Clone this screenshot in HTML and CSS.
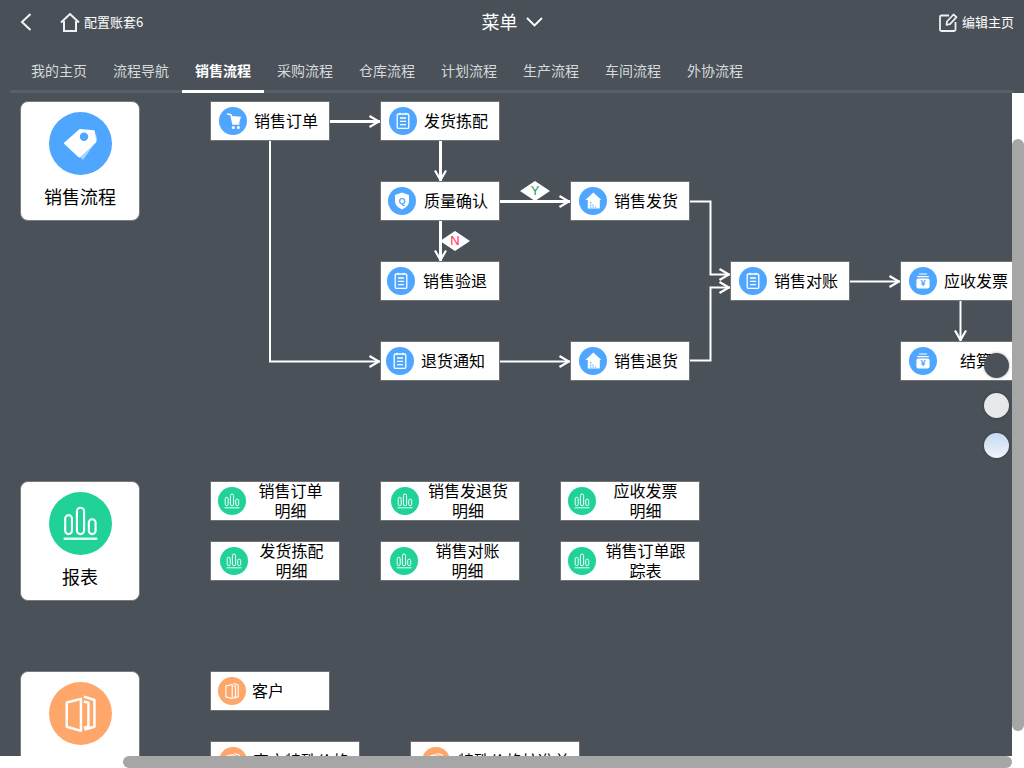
FILE: index.html
```html
<!DOCTYPE html>
<html lang="zh-CN">
<head>
  <meta charset="UTF-8" />
  <meta name="viewport" content="width=device-width, initial-scale=1.0" />
  <title>菜单</title>
  <link rel="stylesheet" href="styles.css">
</head>
<body>

  <svg class="defs" aria-hidden="true">
    <symbol id="i-cart" viewBox="0 0 28 28">
      <path d="M8.500 7 L12 7.800 L14 17 H20" fill="none" stroke="#fff" stroke-width="1.600" stroke-linecap="round" stroke-linejoin="round"/>
      <path d="M12.600 9 L22 9.700 L20 16.400 H14z" fill="#fff"/>
      <circle cx="14.400" cy="20.400" r="1.500" fill="#fff"/>
      <circle cx="19.400" cy="20.400" r="1.500" fill="#fff"/>
    </symbol>
    <symbol id="i-list" viewBox="0 0 28 28">
      <rect x="8.200" y="7" width="11.600" height="14.400" rx="1.200" fill="none" stroke="#fff" stroke-width="1.300"/>
      <path d="M11 5.800 V8 M17 5.800 V8 M11 11 H17 M11 14.300 H17 M11 17.600 H17" fill="none" stroke="#fff" stroke-width="1.300"/>
    </symbol>
    <symbol id="i-shield" viewBox="0 0 28 28">
      <path d="M14 5.600 L21 8 V14 C21 18.400 17.500 21 14 22.400 C10.500 21 7 18.400 7 14 V8z" fill="#fff"/>
    </symbol>
    <symbol id="i-house" viewBox="0 0 28 28">
      <path d="M14.300 5.600 L22.400 13 H20.800 V21.400 H8.800 V13 H6.400z" fill="#fff"/>
      <path d="M11 15h1.400v1.400H11z M11 17.400h1.400v1.400H11z M11 19.400h1.400v1.400H11z M13.400 17.400h1.400v1.400h-1.400z M13.400 19.400h1.400v1.400h-1.400z M15.800 19.400h1.400v1.400h-1.400z" fill="#7dbcff"/>
    </symbol>
    <symbol id="i-bag" viewBox="0 0 28 28">
      <path d="M10 7 H18 M8.200 9.600 H19.800" fill="none" stroke="#fff" stroke-width="1.200"/>
      <rect x="7.400" y="11.400" width="13.200" height="10" rx="1.800" fill="#fff"/>
    </symbol>
    <symbol id="i-bars" viewBox="0 0 28 28">
      <g fill="none" stroke="#fff" stroke-width=".950">
        <rect x="7.200" y="10.300" width="3" height="8.400" rx="1.500"/>
        <rect x="12.400" y="7" width="3.200" height="11.700" rx="1.600"/>
        <rect x="17.700" y="12.100" width="3" height="6.600" rx="1.500"/>
      </g>
      <path d="M6.500 20.800 H21.500" stroke="#fff" stroke-width="1.100" opacity=".85"/>
    </symbol>
    <symbol id="i-books" viewBox="0 0 28 28">
      <g fill="none" stroke="#fff" stroke-width="1.100" stroke-linejoin="round">
        <path d="M7.900 9.100 L14.200 7.500 V21.700 L7.900 19.900z"/>
        <path d="M15.500 8.700 L17.500 9.200 V19.800 L15.500 20.400"/>
        <path d="M15.500 6.500 L20.200 8 V19.900 L15.700 21.100"/>
      </g>
    </symbol>
    <symbol id="i-tag" viewBox="0 0 63 63">
      <path d="M34 48 L48.300 28 L47 22 L30 44z" fill="#a6d4ff"/>
      <path d="M16 31.300 L31 18 L44.800 19.200 L46.300 29.700 L30.300 44.500z" fill="#fff" stroke="#fff" stroke-width="2" stroke-linejoin="round"/>
      <circle cx="35" cy="24.700" r="4.200" fill="#4fa6ff"/>
    </symbol>
  </svg>

  <div class="page">

    <header class="topbar">
      <div class="topbar-left">
        <svg class="back" viewBox="0 0 12 18" width="12" height="18"><path d="M10.500 1 L2 9 L10.500 17" fill="none" stroke="#f2f4f5" stroke-width="2"/></svg>
        <svg class="home" viewBox="0 0 20 19" width="20" height="19"><path d="M1 9.500 L10 1 L19 9.500 M4 8 V18 H16 V8" fill="none" stroke="#eef1f3" stroke-width="2"/></svg>
        <span class="top-text">配置账套6</span>
      </div>
      <div class="topbar-title">
        <span class="top-text">菜单</span>
        <svg viewBox="0 0 17 10" width="17" height="10"><path d="M1 1 L8.500 8.500 L16 1" fill="none" stroke="#fff" stroke-width="1.800"/></svg>
      </div>
      <div class="topbar-right">
        <svg viewBox="0 0 19 19" width="19" height="19"><path d="M10 2.500 H2.500 Q1 2.500 1 4 V16.500 Q1 18 2.500 18 H15 Q16.500 18 16.500 16.500 V9" fill="none" stroke="#eef1f3" stroke-width="1.800"/><path d="M7.500 11.800 L8 8.500 L14.500 1.500 L17.500 4.200 L11 11.200z" fill="none" stroke="#eef1f3" stroke-width="1.700" stroke-linejoin="round"/></svg>
        <span class="top-text">编辑主页</span>
      </div>
    </header>

    <nav class="tabs">
      <a class="tab">我的主页</a>
      <a class="tab">流程导航</a>
      <a class="tab active">销售流程</a>
      <a class="tab">采购流程</a>
      <a class="tab">仓库流程</a>
      <a class="tab">计划流程</a>
      <a class="tab">生产流程</a>
      <a class="tab">车间流程</a>
      <a class="tab">外协流程</a>
    </nav>

    <main class="content">

      <section class="group group-flow">
        <div class="card">
          <svg class="card-icon blue"><use href="#i-tag"/></svg>
          <div class="card-title">销售流程</div>
        </div>
        <div class="flow">
          <svg class="wires" viewBox="210 101 802 280" width="802" height="280">
            <defs>
              <marker id="arrow" viewBox="0 0 13 14" refX="12" refY="7" markerWidth="13" markerHeight="14" markerUnits="userSpaceOnUse" orient="auto">
                <path d="M1.500 1.500 L11 7 L1.500 12.500" fill="none" stroke="#fff" stroke-width="2.200"/>
              </marker>
            </defs>
            <g fill="none" stroke="#fff" stroke-width="3">
              <path d="M330 121.500 H380" marker-end="url(#arrow)"/>
              <path d="M440.500 141 V181" marker-end="url(#arrow)"/>
              <path d="M500 201.500 H570" marker-end="url(#arrow)"/>
              <path d="M440.500 221 V261" marker-end="url(#arrow)"/>
            </g>
            <g fill="none" stroke="#fff" stroke-width="2">
              <path d="M270 141 V361.500 H380" marker-end="url(#arrow)"/>
              <path d="M500 361.500 H570" marker-end="url(#arrow)"/>
              <path d="M690 201.500 H710.500 V274.500 H730" marker-end="url(#arrow)"/>
              <path d="M690 360.500 H710.500 V287.500 H730" marker-end="url(#arrow)"/>
              <path d="M850 281.500 H900" marker-end="url(#arrow)"/>
              <path d="M960.500 301 V341" marker-end="url(#arrow)"/>
            </g>
          </svg>

          <div class="diamond yes">Y</div>
          <div class="diamond no">N</div>

          <div class="node at-order"><svg class="ico blue"><use href="#i-cart"/></svg><span class="label">销售订单</span></div>
          <div class="node at-pick"><svg class="ico blue"><use href="#i-list"/></svg><span class="label">发货拣配</span></div>
          <div class="node at-qc inset-7"><svg class="ico blue" viewBox="0 0 28 28"><use href="#i-shield" width="28" height="28"/><text x="14" y="17.200" class="glyph">Q</text></svg><span class="label">质量确认</span></div>
          <div class="node at-ship"><svg class="ico blue"><use href="#i-house"/></svg><span class="label">销售发货</span></div>
          <div class="node at-reject inset-6"><svg class="ico blue"><use href="#i-list"/></svg><span class="label">销售验退</span></div>
          <div class="node at-notice inset-5"><svg class="ico blue"><use href="#i-list"/></svg><span class="label">退货通知</span></div>
          <div class="node at-return"><svg class="ico blue"><use href="#i-house"/></svg><span class="label">销售退货</span></div>
          <div class="node at-check"><svg class="ico blue"><use href="#i-list"/></svg><span class="label">销售对账</span></div>
          <div class="node at-invoice"><svg class="ico blue" viewBox="0 0 28 28"><use href="#i-bag" width="28" height="28"/><text x="14" y="19.200" class="glyph">¥</text></svg><span class="label">应收发票</span></div>
          <div class="node at-settle"><svg class="ico blue" viewBox="0 0 28 28"><use href="#i-bag" width="28" height="28"/><text x="14" y="19.200" class="glyph">¥</text></svg><span class="label">结算</span></div>
        </div>
      </section>

      <section class="group group-report">
        <div class="card">
          <svg class="card-icon green"><use href="#i-bars"/></svg>
          <div class="card-title">报表</div>
        </div>
        <div class="rows">
          <div class="row">
            <div class="node report w130 inset-7"><svg class="ico green"><use href="#i-bars"/></svg><span class="label">销售订单<br>明细</span></div>
            <div class="node report w140 inset-10 mid"><svg class="ico green"><use href="#i-bars"/></svg><span class="label">销售发退货<br>明细</span></div>
            <div class="node report w140 inset-7"><svg class="ico green"><use href="#i-bars"/></svg><span class="label">应收发票<br>明细</span></div>
          </div>
          <div class="row">
            <div class="node report w130 inset-9"><svg class="ico green"><use href="#i-bars"/></svg><span class="label">发货拣配<br>明细</span></div>
            <div class="node report w140 inset-9 mid"><svg class="ico green"><use href="#i-bars"/></svg><span class="label">销售对账<br>明细</span></div>
            <div class="node report w140 inset-7"><svg class="ico green"><use href="#i-bars"/></svg><span class="label">销售订单跟<br>踪表</span></div>
          </div>
        </div>
      </section>

      <section class="group">
        <div class="card">
          <svg class="card-icon orange"><use href="#i-books"/></svg>
        </div>
        <div class="rows rows-wide">
          <div class="row">
            <div class="node plain w120 inset-7"><svg class="ico orange"><use href="#i-books"/></svg><span class="label">客户</span></div>
          </div>
          <div class="row row-wide">
            <div class="node plain w150"><svg class="ico orange"><use href="#i-books"/></svg><span class="label">客户特殊价格</span></div>
            <div class="node w170 inset-11"><svg class="ico orange"><use href="#i-books"/></svg><span class="label">特殊价格核准单</span></div>
          </div>
        </div>
      </section>

    </main>

    <div class="dots">
      <span class="dot dot-dark"></span>
      <span class="dot dot-grey"></span>
      <span class="dot dot-blue"></span>
    </div>

    <div class="track track-v"><div class="thumb thumb-v"></div></div>
    <div class="track track-h"><div class="thumb thumb-h"></div></div>

  </div>

</body>
</html>
```

FILE: styles.css
```css
html, body {
  margin: 0;
  padding: 0;
  height: 100%;
  overflow: hidden;
}

body {
  background: #4b5158;
  color: #000;
  font-family: "Noto Sans CJK SC", "Liberation Sans", sans-serif;
}

.defs {
  position: absolute;
  width: 0;
  height: 0;
}

.glyph {
  fill: #4fa6ff;
  font-family: "Liberation Sans", sans-serif;
  font-size: 9px;
  font-weight: bold;
  text-anchor: middle;
}

.page {
  position: relative;
  width: 1024px;
  height: 768px;
  overflow: hidden;
}

/* Top bar */
.topbar {
  display: grid;
  grid-template-columns: 1fr auto 1fr;
  align-items: center;
  height: 44px;
  background: #495057;
  color: #fff;
  font-size: 13px;
}

.topbar-left,
.topbar-title,
.topbar-right {
  display: flex;
  align-items: center;
}

.top-text {
  padding-bottom: 2px;
}

.topbar-left {
  padding-left: 20px;
}

.topbar-left .home {
  margin: 0 4px 0 28px;
}

.topbar-title {
  font-size: 18px;
  gap: 8px;
}

.topbar-right {
  justify-content: flex-end;
  gap: 4px;
  padding-right: 10px;
}

/* Tabs */
.tabs {
  display: flex;
  height: 49px;
  box-sizing: border-box;
  width: 1004px;
  margin-left: 10px;
  padding-left: 8px;
  border-bottom: 3px solid #5a6068;
}

.tab {
  width: 82px;
  height: 49px;
  box-sizing: border-box;
  padding-top: 16px;
  text-align: center;
  font-size: 14px;
  line-height: 20px;
  color: #d6dadd;
}

.tab.active {
  color: #fff;
  font-weight: bold;
  border-bottom: 3px solid #fff;
}

/* Sections */
.content {
  height: 675px;
}

.group {
  display: flex;
  gap: 70px;
  height: 190px;
  padding: 8px 0 0 20px;
  box-sizing: border-box;
}

.group-flow {
  height: 380px;
}

.card {
  display: flex;
  flex-direction: column;
  align-items: center;
  flex: none;
  width: 120px;
  height: 120px;
  padding-top: 10px;
  box-sizing: border-box;
  background: #fff;
  border: 1px solid #777c81;
  border-radius: 8px;
}

.card-icon {
  width: 63px;
  height: 63px;
  border-radius: 50%;
}

.card-title {
  margin-top: 9px;
  font-size: 18px;
  line-height: 24px;
}

.blue { background: #4fa6ff; }
.green { background: #20d298; }
.orange { background: #ffa76b; }

/* Nodes */
.node {
  display: flex;
  align-items: center;
  flex: none;
  width: 120px;
  height: 40px;
  box-sizing: border-box;
  background: #fff;
  border: 1px solid #6f7378;
  font-size: 16px;
  line-height: 20px;
  white-space: nowrap;
}

.ico {
  flex: none;
  width: 28px;
  height: 28px;
  margin-left: 8px;
  border-radius: 50%;
}

.inset-5 .ico { margin-left: 5px; }
.inset-6 .ico { margin-left: 6px; }
.inset-7 .ico { margin-left: 7px; }
.inset-9 .ico { margin-left: 9px; }
.inset-10 .ico { margin-left: 10px; }
.inset-11 .ico { margin-left: 11px; }

.label {
  flex: none;
  width: 64px;
  margin-left: 7px;
  padding-bottom: 2px;
  text-align: center;
}

.at-qc .label,
.at-reject .label {
  margin-left: 8px;
}

.w120 { width: 120px; }
.w130 { width: 130px; }
.w140 { width: 140px; }
.w150 { width: 150px; }
.w170 { width: 170px; }

.report .label {
  flex: 1;
  width: auto;
  margin-left: 0;
  padding-right: 4px;
}

.report.mid .label {
  padding-right: 2px;
}

.plain .label {
  width: auto;
  margin-left: 6px;
  text-align: left;
}

.w170 .label {
  width: auto;
  margin-left: 8px;
}

/* Flow diagram */
.flow {
  position: relative;
  width: 802px;
  height: 280px;
  overflow: hidden;
}

.wires {
  position: absolute;
  left: 0;
  top: 0;
}

.flow .node { position: absolute; }

.at-order { left: 0; top: 0; }
.at-pick { left: 170px; top: 0; }
.at-qc { left: 170px; top: 80px; }
.at-ship { left: 360px; top: 80px; }
.at-reject { left: 170px; top: 160px; }
.at-notice { left: 170px; top: 240px; }
.at-return { left: 360px; top: 240px; }
.at-check { left: 520px; top: 160px; }
.at-invoice { left: 690px; top: 160px; }
.at-settle { left: 690px; top: 240px; }

.diamond {
  position: absolute;
  width: 30px;
  height: 20px;
  background: #fff;
  clip-path: polygon(50% 0, 100% 50%, 50% 100%, 0 50%);
  font-family: "Liberation Sans", sans-serif;
  font-size: 13px;
  line-height: 20px;
  text-align: center;
}

.diamond.yes { left: 310px; top: 80px; color: #1f9d55; }
.diamond.no { left: 230px; top: 130px; color: #ff2d55; }

/* Report and base data rows */
.rows {
  display: flex;
  flex-direction: column;
  gap: 20px;
}

.rows-wide {
  gap: 30px;
}

.row {
  display: flex;
  gap: 40px;
}

.row-wide {
  gap: 50px;
}

/* Floating dots */
.dots {
  position: absolute;
  right: 15px;
  top: 353px;
  display: flex;
  flex-direction: column;
  gap: 15px;
}

.dot {
  width: 25px;
  height: 25px;
  border-radius: 50%;
  box-shadow: 0 0 3px rgba(0,0,0,0.35);
}

.dot-dark { background: #4b5158; }
.dot-grey { background: #e6e9ea; }
.dot-blue { background: linear-gradient(#c6daf3, #f0f3f9); }

/* Scrollbars */
.track {
  position: absolute;
  background: #fff;
}

.track-v {
  right: 0;
  top: 93px;
  bottom: 0;
  width: 12px;
}

.track-h {
  left: 0;
  right: 0;
  bottom: 0;
  height: 12px;
}

.thumb {
  position: absolute;
  background: #a6a6a6;
  border-radius: 6px;
}

.thumb-v {
  left: 0;
  top: 46px;
  width: 12px;
  height: 592px;
}

.thumb-h {
  left: 123px;
  top: 0;
  width: 889px;
  height: 12px;
}
```
